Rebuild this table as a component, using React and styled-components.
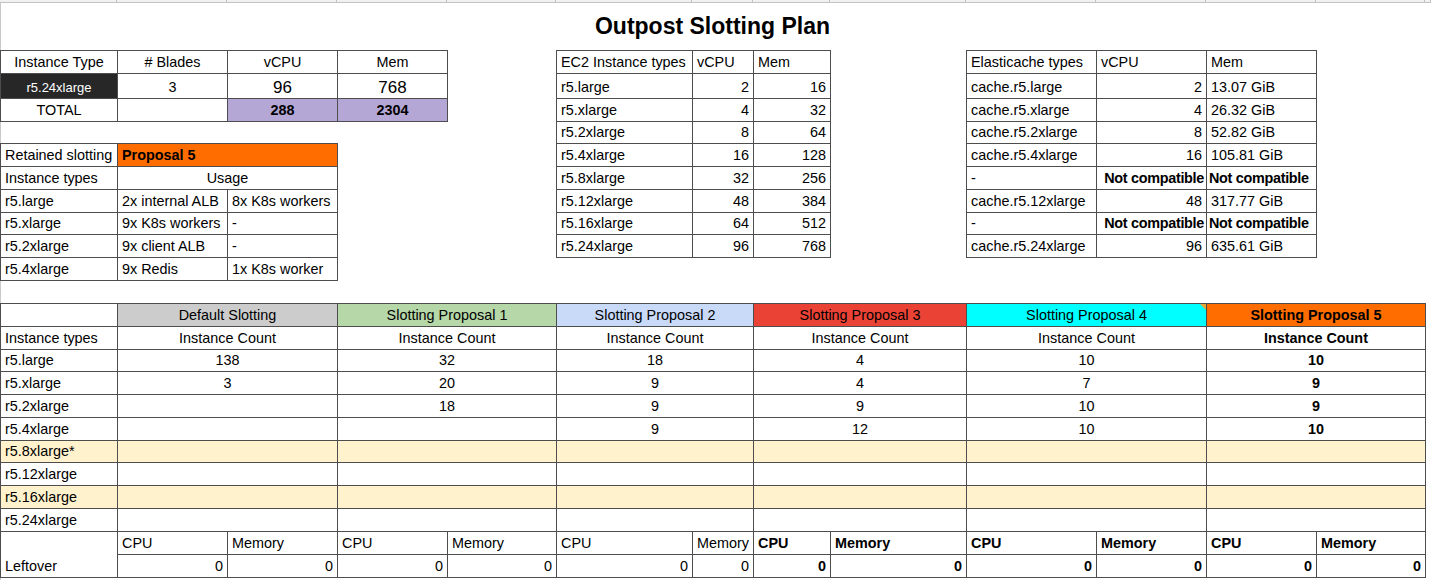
import React from 'react';
import styled, { createGlobalStyle } from 'styled-components';

// column widths of the sheet, measured between grid lines
const COLS = [117, 110, 110, 110, 109, 136, 61, 77, 136, 130, 110, 110, 109];
const LINE = '#4d4d4d';
const YELLOW = '#fff2cc';

const sheetTracks = COLS.map((w) => `${w}px`).join(' ') + ' 1fr';
const tracks = (from, to) => COLS.slice(from, to).map((w) => `${w - 1}px`).join(' ');
const rowsFrom = (lines) => lines.slice(1).map((l, i) => `${l - lines[i] - 1}px`).join(' ');

const GlobalStyle = createGlobalStyle`
  body {
    margin: 0;
    background: #fff;
    color: #000;
    font-family: 'Liberation Sans', Arial, sans-serif;
  }
`;

const Sheet = styled.div`
  width: 1431px;
  height: 580px;
  overflow: hidden;
  display: flex;
  flex-direction: column;
  font-size: 14.4px;
  box-shadow: inset 1px 0 0 #c9c9c9;
`;

const Strip = styled.div`
  display: grid;
  grid-template-columns: ${sheetTracks};
  height: 3px;
`;

const StripCell = styled.div`
  background: #f1f1f1;
  border-right: 1px solid #c2c2c2;
  border-bottom: 1px solid #c2c2c2;
`;

const Title = styled.h1`
  margin: 0;
  width: 1425px;
  height: 47px;
  display: flex;
  align-items: center;
  justify-content: center;
  font-size: 23px;
  font-weight: 700;
`;

const Band = styled.div`
  display: grid;
  grid-template-columns: ${sheetTracks};
  align-items: start;
  margin-top: ${(p) => p.$gap || 0}px;
`;

const Stack = styled.div`
  grid-column: ${(p) => p.$cols};
  display: flex;
  flex-direction: column;
  align-items: flex-start;
  gap: 21px;
`;

const Table = styled.div`
  grid-column: ${(p) => p.$place || 'auto'};
  justify-self: start;
  display: grid;
  gap: 1px;
  padding: 1px;
  background: ${LINE};
  grid-template-columns: ${(p) => p.$cols};
  grid-template-rows: ${(p) => p.$rows};
`;

const JUSTIFY = { left: 'flex-start', center: 'center', right: 'flex-end' };

const Cell = styled.div`
  position: relative;
  grid-column: span ${(p) => p.$span || 1};
  grid-row: span ${(p) => p.$down || 1};
  display: flex;
  align-items: flex-end;
  justify-content: ${(p) => JUSTIFY[p.$align || 'left']};
  padding: 0 ${(p) => (p.$tight ? 2 : 4)}px 2px;
  background: ${(p) => p.$bg || '#fff'};
  color: ${(p) => p.$fg || '#000'};
  font-weight: ${(p) => (p.$bold ? 700 : 400)};
  font-size: ${(p) => (p.$size ? `${p.$size}px` : 'inherit')};
  letter-spacing: ${(p) => (p.$tight ? '-0.3px' : 'normal')};
  line-height: 17px;
  white-space: nowrap;

  ${(p) =>
    p.$note &&
    `&::after {
      content: '';
      position: absolute;
      top: 0;
      right: 0;
      border-top: 6px solid #e7a53a;
      border-left: 6px solid transparent;
    }`}
`;

const TOP_LINES = [50, 73, 98, 121, 143, 166, 189, 212, 234, 257, 280];
const BOTTOM_LINES = [303, 326, 349, 371, 394, 417, 440, 462, 485, 508, 531, 554, 577];

const EC2 = [
  ['r5.large', '2', '16'],
  ['r5.xlarge', '4', '32'],
  ['r5.2xlarge', '8', '64'],
  ['r5.4xlarge', '16', '128'],
  ['r5.8xlarge', '32', '256'],
  ['r5.12xlarge', '48', '384'],
  ['r5.16xlarge', '64', '512'],
  ['r5.24xlarge', '96', '768'],
];

const CACHE = [
  ['cache.r5.large', '2', '13.07 GiB'],
  ['cache.r5.xlarge', '4', '26.32 GiB'],
  ['cache.r5.2xlarge', '8', '52.82 GiB'],
  ['cache.r5.4xlarge', '16', '105.81 GiB'],
  ['-', 'Not compatible', 'Not compatible'],
  ['cache.r5.12xlarge', '48', '317.77 GiB'],
  ['-', 'Not compatible', 'Not compatible'],
  ['cache.r5.24xlarge', '96', '635.61 GiB'],
];

const USAGE = [
  ['r5.large', '2x internal ALB', '8x K8s workers'],
  ['r5.xlarge', '9x K8s workers', '-'],
  ['r5.2xlarge', '9x client ALB', '-'],
  ['r5.4xlarge', '9x Redis', '1x K8s worker'],
];

const PROPOSALS = [
  { name: 'Default Slotting', bg: '#cccccc', counts: ['138', '3'] },
  { name: 'Slotting Proposal 1', bg: '#b6d7a8', counts: ['32', '20', '18'] },
  { name: 'Slotting Proposal 2', bg: '#c9daf8', counts: ['18', '9', '9', '9'] },
  { name: 'Slotting Proposal 3', bg: '#ea4335', counts: ['4', '4', '9', '12'], strong: true },
  { name: 'Slotting Proposal 4', bg: '#00ffff', counts: ['10', '7', '10', '10'], strong: true, note: true },
  { name: 'Slotting Proposal 5', bg: '#ff6d01', counts: ['10', '9', '9', '10'], strong: true, bold: true },
];

const TYPES = ['r5.large', 'r5.xlarge', 'r5.2xlarge', 'r5.4xlarge', 'r5.8xlarge*', 'r5.12xlarge', 'r5.16xlarge', 'r5.24xlarge'];
const SHADED = ['r5.8xlarge*', 'r5.16xlarge'];

function BladesTable() {
  return (
    <Table $cols={tracks(0, 4)} $rows={rowsFrom(TOP_LINES.slice(0, 4))}>
      <Cell $align="center">Instance Type</Cell>
      <Cell $align="center"># Blades</Cell>
      <Cell $align="center">vCPU</Cell>
      <Cell $align="center">Mem</Cell>
      <Cell $align="center" $bg="#272727" $fg="#fff" $size={13}>r5.24xlarge</Cell>
      <Cell $align="center">3</Cell>
      <Cell $align="center" $size={17}>96</Cell>
      <Cell $align="center" $size={17}>768</Cell>
      <Cell $align="center">TOTAL</Cell>
      <Cell />
      <Cell $align="center" $bold $bg="#b4a7d6">288</Cell>
      <Cell $align="center" $bold $bg="#b4a7d6">2304</Cell>
    </Table>
  );
}

function RetainedTable() {
  return (
    <Table $cols={tracks(0, 3)} $rows={rowsFrom(TOP_LINES.slice(4))}>
      <Cell>Retained slotting</Cell>
      <Cell $span={2} $bold $bg="#ff6d01">Proposal 5</Cell>
      <Cell>Instance types</Cell>
      <Cell $span={2} $align="center">Usage</Cell>
      {USAGE.map(([type, a, b]) => (
        <React.Fragment key={type}>
          <Cell>{type}</Cell>
          <Cell>{a}</Cell>
          <Cell>{b}</Cell>
        </React.Fragment>
      ))}
    </Table>
  );
}

function SizesTable({ place, from, head, rows, memAlign }) {
  return (
    <Table $place={place} $cols={tracks(from, from + 3)} $rows={rowsFrom(TOP_LINES.slice(0, 10))}>
      {head.map((h) => (
        <Cell key={h}>{h}</Cell>
      ))}
      {rows.map(([type, cpu, mem], i) => {
        const na = cpu === 'Not compatible';
        return (
          <React.Fragment key={i}>
            <Cell>{type}</Cell>
            <Cell $align="right" $bold={na} $tight={na}>{cpu}</Cell>
            <Cell $align={na ? 'left' : memAlign} $bold={na} $tight={na}>{mem}</Cell>
          </React.Fragment>
        );
      })}
    </Table>
  );
}

function SlottingTable() {
  return (
    <Table $cols={tracks(0, 13)} $rows={rowsFrom(BOTTOM_LINES)}>
      <Cell />
      {PROPOSALS.map((p) => (
        <Cell key={p.name} $span={2} $align="center" $bg={p.bg} $bold={p.bold} $note={p.note}>
          {p.name}
        </Cell>
      ))}
      <Cell>Instance types</Cell>
      {PROPOSALS.map((p) => (
        <Cell key={p.name} $span={2} $align="center" $bold={p.bold}>Instance Count</Cell>
      ))}
      {TYPES.map((type, r) => {
        const bg = SHADED.includes(type) ? YELLOW : undefined;
        return (
          <React.Fragment key={type}>
            <Cell $bg={bg}>{type}</Cell>
            {PROPOSALS.map((p) => (
              <Cell key={p.name} $span={2} $align="center" $bold={p.bold} $bg={bg}>
                {p.counts[r] || ''}
              </Cell>
            ))}
          </React.Fragment>
        );
      })}
      <Cell $down={2}>Leftover</Cell>
      {PROPOSALS.map((p) => (
        <React.Fragment key={p.name}>
          <Cell $bold={p.strong}>CPU</Cell>
          <Cell $bold={p.strong}>Memory</Cell>
        </React.Fragment>
      ))}
      {PROPOSALS.map((p) => (
        <React.Fragment key={p.name}>
          <Cell $align="right" $bold={p.strong}>0</Cell>
          <Cell $align="right" $bold={p.strong}>0</Cell>
        </React.Fragment>
      ))}
    </Table>
  );
}

export default function App() {
  return (
    <>
      <GlobalStyle />
      <Sheet>
        <Strip>
          {COLS.map((w, i) => (
            <StripCell key={i} />
          ))}
          <StripCell />
        </Strip>
        <Title>Outpost Slotting Plan</Title>
        <Band>
          <Stack $cols="1 / 5">
            <BladesTable />
            <RetainedTable />
          </Stack>
          <SizesTable
            place="6 / 9"
            from={5}
            head={['EC2 Instance types', 'vCPU', 'Mem']}
            rows={EC2}
            memAlign="right"
          />
          <SizesTable
            place="10 / 13"
            from={9}
            head={['Elasticache types', 'vCPU', 'Mem']}
            rows={CACHE}
            memAlign="left"
          />
        </Band>
        <Band $gap={22}>
          <Stack $cols="1 / 15">
            <SlottingTable />
          </Stack>
        </Band>
      </Sheet>
    </>
  );
}
